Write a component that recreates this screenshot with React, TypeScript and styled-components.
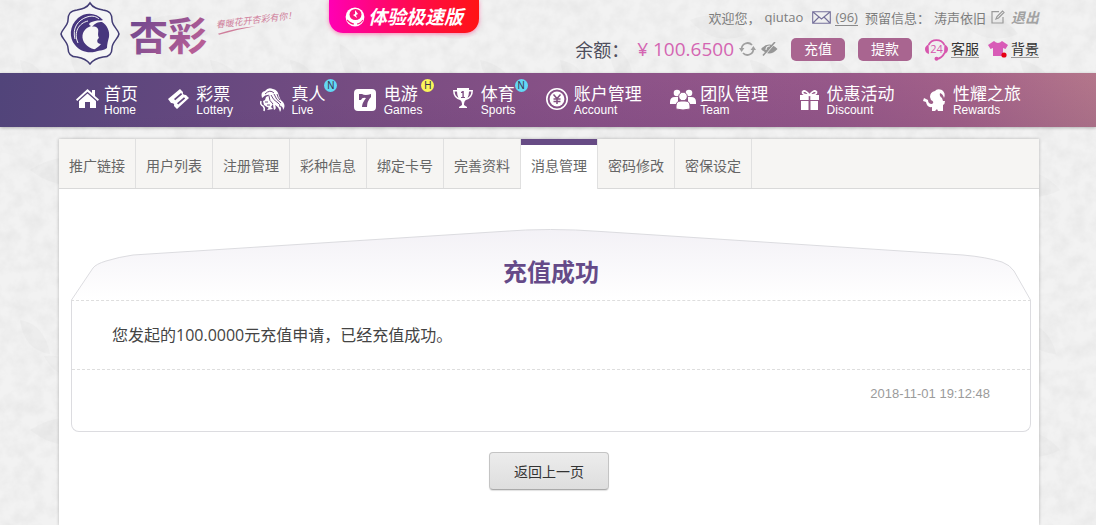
import React from "react";
import styled, { createGlobalStyle, css } from "styled-components";

const CJK = `"Open Sans", "Noto Sans CJK SC", sans-serif`;
const LATIN = `"Liberation Sans", "Noto Sans CJK SC", sans-serif`;

const GlobalStyle = createGlobalStyle`
  * { box-sizing: border-box; }
  body { margin: 0; background: #efefef; font-family: ${CJK}; color: #444; }
  a { color: inherit; text-decoration: none; }
  button { font-family: inherit; cursor: pointer; }
  h1, p, ul { margin: 0; padding: 0; }
`;

const Page = styled.div`
  position: relative;
  isolation: isolate;
  display: flex;
  flex-direction: column;
  min-height: 100vh;
`;

const Backdrop = styled.svg`
  position: absolute;
  inset: 0;
  z-index: -1;
  width: 100%;
  height: 100%;
`;

const frame = css`
  width: calc(100% - 116px);
  max-width: 980px;
  margin: 0 auto;
  position: relative;
  left: 1px;
`;

const Header = styled.header`
  ${frame}
  display: flex;
  align-items: flex-start;
  height: 73px;
`;

const LogoLink = styled.a`
  flex: none;
  width: 270px;
  height: 68px;
`;

const Banner = styled.a`
  flex: none;
  display: flex;
  align-items: center;
  justify-content: center;
  gap: 3px;
  width: 150px;
  height: 33px;
  border-radius: 0 0 14px 14px;
  background: linear-gradient(90deg, #ff00b4, #ff0a50 55%, #ff1414);
  box-shadow: 0 1px 4px rgba(255, 60, 140, 0.6);
  color: #fff;
  font-size: 19px;
  line-height: 32px;
  font-weight: 700;
  font-style: italic;
  white-space: nowrap;
`;

const Account = styled.div`
  flex: 1;
  display: flex;
  flex-direction: column;
  align-items: flex-end;
  padding-top: 7px;
  white-space: nowrap;
`;

const Row = styled.div<{ $size: number; $height: number }>`
  display: flex;
  align-items: center;
  height: ${(p) => p.$height}px;
  font-size: ${(p) => p.$size}px;
  color: #7d7d7d;
`;

const Item = styled.span<{ $gap?: number }>`
  display: inline-flex;
  align-items: center;
  margin-left: ${(p) => p.$gap ?? 0}px;
`;

const TextLink = styled.a<{ $dark?: boolean }>`
  line-height: 16px;
  border-bottom: 1px solid ${(p) => (p.$dark ? "#999" : "#8a8a8a")};
  color: ${(p) => (p.$dark ? "#333" : "#7d7d7d")};
`;

const Logout = styled.a`
  margin-left: 6px;
  font-size: 14px;
  font-weight: 700;
  font-style: italic;
  color: #a2a2a2;
`;

const BalanceLabel = styled.span`
  font-size: 18px;
  color: #4e4e5c;
`;

const Amount = styled.span`
  font-size: 19px;
  color: #d465b2;
`;

const IconButton = styled.button`
  display: flex;
  margin-left: 5px;
  padding: 0;
  border: 0;
  background: none;
`;

const PillButton = styled.button`
  width: 54px;
  height: 23px;
  margin-left: 13px;
  padding: 0;
  border: 0;
  border-radius: 5px;
  background: #a96590;
  color: #fff;
  font-size: 14px;
  line-height: 22px;
`;

const NavBar = styled.nav`
  height: 54px;
  background: linear-gradient(176deg, rgba(255, 255, 255, 0) 40%, rgba(70, 40, 100, 0.16)),
    linear-gradient(98deg, #51447a 0%, #65487f 18%, #7a4d82 36%, #8b5288 55%, #98598a 75%, #a8648a 88%, #bb7c8d 100%);
  box-shadow: 0 1px 3px rgba(0, 0, 0, 0.25);
`;

const NavList = styled.ul`
  ${frame}
  display: flex;
  justify-content: space-between;
  padding: 11px 18px 0 17px;
  list-style: none;
`;

const NavLink = styled.a`
  position: relative;
  display: grid;
  grid-template-columns: 28px auto;
  grid-template-rows: 20px 12px;
  color: #fff;
  white-space: nowrap;
  svg { grid-row: 1 / 3; margin-top: 4px; }
`;

const NavLabel = styled.span`
  font-size: 17px;
  line-height: 20px;
`;

const NavSub = styled.span`
  font-family: ${LATIN};
  font-size: 12px;
  line-height: 12px;
`;

const Badge = styled.span<{ $hot: boolean }>`
  position: absolute;
  left: 100%;
  top: -5px;
  width: 13px;
  height: 13px;
  margin-left: -1px;
  border-radius: 50%;
  background: ${(p) => (p.$hot ? "#fbf65a" : "#63d8f4")};
  color: #3a3350;
  font-family: ${LATIN};
  font-size: 10px;
  line-height: 13px;
  text-align: center;
`;

const Panel = styled.main`
  ${frame}
  flex: 1;
  margin-top: 12px;
  background: #fff;
  box-shadow: 0 0 3px rgba(0, 0, 0, 0.25);
`;

const Tabs = styled.nav`
  display: flex;
  height: 50px;
  background: #f6f5f3;
  border-bottom: 1px solid #d9d9d9;
`;

const Tab = styled.a<{ $active: boolean }>`
  width: 77px;
  height: 49px;
  padding-top: 2px;
  border-right: 1px solid #e0e0e0;
  color: #666;
  font-size: 14px;
  line-height: 49px;
  text-align: center;
  white-space: nowrap;
  ${(p) =>
    p.$active &&
    css`
      height: 50px;
      background: linear-gradient(#674b85 6px, #fff 6px);
    `}
`;

const Notice = styled.article`
  position: relative;
  margin: 40px 8px 0 12px;
`;

const Arch = styled.svg`
  position: absolute;
  top: 0;
  left: 0;
  z-index: 0;
  width: 100%;
  height: 72px;
`;

const Title = styled.h1`
  position: relative;
  height: 71px;
  padding-top: 25px;
  color: #654a88;
  font-size: 24px;
  line-height: 36px;
  text-align: center;
`;

const NoticeBody = styled.div`
  border: 1px solid #dcdce0;
  border-top: 1px dashed #dedede;
  border-radius: 0 0 8px 8px;
`;

const Message = styled.p`
  padding: 22px 40px;
  border-bottom: 1px dashed #dedede;
  font-size: 16px;
  line-height: 24px;
`;

const Time = styled.time`
  display: block;
  padding: 15px 40px 29px;
  color: #9b9b9b;
  font-family: ${LATIN};
  font-size: 13px;
  line-height: 17px;
  text-align: right;
`;

const BackButton = styled.button`
  display: block;
  width: 120px;
  height: 38px;
  margin: 20px auto 34px;
  border: 1px solid #c4c4c4;
  border-bottom-color: #aaa;
  border-radius: 4px;
  background: linear-gradient(#ececec, #dedede);
  box-shadow: 0 1px 1px rgba(0, 0, 0, 0.12);
  color: #333;
  font-size: 14px;
`;

function LeafSprig() {
  return (
    <g fill="#000" fillOpacity="0.02">
      <path d="M20 60q24 4 30 34q-26-4-30-34zM44 96q30-2 44 22q-30 4-44-22zM70 44q26 14 22 44q-24-14-22-44z" />
      <path d="M150 20q36-14 58 14q-34 14-58-14zM180 70q-8 34 18 56q12-32-18-56zM210 60q30 6 36 34q-30-2-36-34z" />
      <path d="M30 170q40-26 74 4q-38 24-74-4zM110 190q8 34-14 54q-18-28 14-54zM190 180q34-20 60 10q-36 18-60-10z" />
    </g>
  );
}

function Texture() {
  return (
    <Backdrop aria-hidden="true">
      <defs>
        <filter id="mottle" x="0" y="0" width="100%" height="100%">
          <feTurbulence type="fractalNoise" baseFrequency="0.07" numOctaves="4" seed="8" />
          <feColorMatrix values="0 0 0 0 0.3  0 0 0 0 0.3  0 0 0 0 0.3  0.18 0 0 0 -0.06" />
        </filter>
        <pattern id="leaves" width="270" height="260" patternUnits="userSpaceOnUse">
          <LeafSprig />
        </pattern>
      </defs>
      <rect width="100%" height="100%" fill="#f2f2f2" />
      <rect width="100%" height="100%" filter="url(#mottle)" />
      <rect width="100%" height="100%" fill="url(#leaves)" />
    </Backdrop>
  );
}

function Logo() {
  return (
    <svg width="270" height="68" viewBox="0 0 270 68" role="img" aria-label="杏彩">
      <defs>
        <linearGradient id="brand" x1="0" x2="1" y1="0" y2="0.6">
          <stop offset="0" stopColor="#64448e" />
          <stop offset="1" stopColor="#b85f96" />
        </linearGradient>
      </defs>
      <path
        d="M31 3C34 8 39 9 44 10C51 11 53 14 53 20C53 26 59 29 60 34C59 39 53 42 53 48C53 54 50 57 44 57C38 58 34 60 31 64C28 60 24 58 18 57C12 57 9 54 9 48C9 42 3 39 2 34C3 29 9 26 9 20C9 14 11 11 18 10C23 9 28 8 31 3Z"
        fill="#f5f5f6"
        stroke="#433d75"
        strokeWidth="1.5"
      />
      <path
        d="M44 20C37 12 26 12 19 18C10 26 10 38 16 45C22 53 33 54 41 50C33 50 26 46 24 40C22 33 26 28 32 26C28 24 31 22 36 21C39 20 42 21 44 20Z"
        fill="#47367e"
      />
      <path d="M43 22C48 25 51 31 50 37C49 41 48 44 48 48C44 51 39 51 35 50C38 47 40 47 42 44C38 44 37 40 40 38C38 34 40 32 39 29C38 27 36 26 33 27C36 23 39 22 43 22Z" fill="#47367e" />
      <path d="M16 39C13 28 19 20 28 17C34 15 38 17 40 19M19 43C14 32 20 23 29 21" fill="none" stroke="#f5f5f6" strokeWidth="1" />
      <text x="70" y="50" fill="url(#brand)" fontFamily={CJK} fontSize="39" fontWeight="700">杏彩</text>
      <g transform="rotate(-7 157 26)" fill="#cf7e9b">
        <text x="157" y="28" fontFamily={CJK} fontSize="9" fontStyle="italic">春暖花开杏彩有你！</text>
        <path d="M158 34Q178 30 196 31Q178 32 159 35Z" />
      </g>
    </svg>
  );
}

function Ball() {
  return (
    <svg width="20" height="20" viewBox="0 0 20 20" aria-hidden="true">
      <circle cx="10" cy="10" r="9.4" fill="#fff" />
      <ellipse cx="10.5" cy="7.5" rx="6" ry="5.5" fill="#fb147c" />
      <path d="M10 3L13 7L11 8L12 11L8 8L10 7Z" fill="#fff" />
      <path d="M2 13Q6 17 9 17M18 13Q15 17 12 17" stroke="#fb147c" fill="none" strokeWidth="1.2" />
    </svg>
  );
}

const Envelope = () => (
  <svg width="19" height="13" viewBox="0 0 19 13" fill="none" stroke="#75709b" strokeWidth="1.1" aria-hidden="true">
    <path d="M.7.7H18.3V12.3H.7ZM1 1L9.5 8L18 1M1 12L7 6M18 12L12 6" />
  </svg>
);

const EditIcon = () => (
  <svg width="14" height="14" viewBox="0 0 14 14" fill="none" stroke="#9a9a9a" strokeWidth="1.2" aria-hidden="true">
    <path d="M8 1.6H1V13H12V7M5 9L6 6.5L11.5 1L13 2.5L7.5 8Z" />
  </svg>
);

const RefreshIcon = () => (
  <svg width="17" height="16" viewBox="0 0 17 16" aria-hidden="true">
    <path d="M2.6 8A6 6 0 0 1 13 4M14.4 8A6 6 0 0 1 4 12" fill="none" stroke="#a0a0a0" strokeWidth="1.8" />
    <path d="M0 7H5.4L2.6 11ZM11.6 9H17L14.4 5Z" fill="#a0a0a0" />
  </svg>
);

const EyeOffIcon = () => (
  <svg width="17" height="14" viewBox="0 0 17 14" aria-hidden="true">
    <path d="M0 7Q8 -2 16.5 7Q8 16 0 7Z" fill="#969696" />
    <path d="M5 8Q5 4 9 4M15 0L3 14" fill="none" stroke="#f0f0f0" strokeWidth="1.1" />
    <path d="M14 0L2 13.5" stroke="#969696" strokeWidth="1.6" />
  </svg>
);

const HeadsetIcon = () => (
  <svg width="23" height="23" viewBox="0 0 23 23" aria-hidden="true">
    <path d="M3.5 7A9 9 0 0 1 19.5 7M19.5 15Q17 20 12 21" fill="none" stroke="#d756ad" strokeWidth="1.7" />
    <path d="M3.6 6.5Q0 8 0 11Q0 15 4 16ZM19.4 6.5Q23 8 23 11Q23 15 19 16Z" fill="#d756ad" />
    <circle cx="11.5" cy="20.8" r="2" fill="#d756ad" />
    <text x="11.5" y="15" textAnchor="middle" fill="#d756ad" fontFamily={CJK} fontSize="11">24</text>
  </svg>
);

const ShirtIcon = () => (
  <svg width="20" height="17" viewBox="0 0 20 17" aria-hidden="true">
    <path d="M0 4L6 0Q10 4 14 0L20 4L17.5 8L15 7V15H5V7L2.5 8Z" fill="#d85bb7" />
    <circle cx="16" cy="14" r="2.6" fill="#e60012" />
  </svg>
);

const navIcons: Record<string, React.ReactNode> = {
  Home: (
    <path d="M0 11.5L11.5 1L16 5V2H19V8L23 11.5L21.8 13L11.5 3.8L1.2 13ZM3 13L11.5 5.5L20 13V20H14V14H9V20H3Z" />
  ),
  Lottery: (
    <path fillRule="evenodd" d="M0 11L12 1L15 4Q14 7 18 7L21 10L9 21L6 18Q7 15 3 15ZM6 11L13 5L14.2 6.3L7.2 12.3ZM9 15.3L16 9.3L17.2 10.6L10.2 16.6Z" />
  ),
  Live: (
    <g transform="translate(-3 0)">
      <path d="M2 10Q0 4 5 3Q8-1 13 1Q18 2 19 8Q20 12 23 14Q26 18 23 22Q23 18 20 18Q22 21 20 24Q19 19 15 17Q17 21 14 22Q13 18 13 16L11 19L13 21L7 22Q10 19 7 19L4 17L3 13L5 12L6 9L10 7Q6 6 2 10Z" />
      <path d="M1 13Q0 17 3 18Q5 20 4 23" fill="none" stroke="currentColor" strokeWidth="1.5" />
      <g fill="none" stroke="#6f4b80" strokeWidth="1">
        <path d="M5 6Q10 1 14 5M11 7Q13 12 18 15Q20 16 20 19M14 6Q16 12 21 15M17 6Q18 10 20 12M9 8Q9 13 13 16" />
        <path d="M5 14H8M7 17H10" />
      </g>
    </g>
  ),
  Games: (
    <g transform="translate(-2 0)">
      <path fillRule="evenodd" d="M4 1H18Q22 1 22 5V19Q22 23 18 23H4Q0 23 0 19V5Q0 1 4 1ZM5 6V12H7Q8 9 12 10Q8 15 8 19H13Q13 13 17 9V6Q11 8 8 6Z" />
    </g>
  ),
  Sports: (
    <path fillRule="evenodd" d="M4 0H16V2H20Q20 10 13 12Q11 13 11 17L14 19V20H6V19L9 17Q9 13 7 12Q0 10 0 2H4ZM1.6 3.5Q2 8 5.5 10Q4 7 4 3.5ZM18.4 3.5Q18 8 14.5 10Q16 7 16 3.5ZM8 4V5H9.4V9H8V10H12V9H10.8V3H9.5Z" />
  ),
  Account: (
    <g fill="none" stroke="currentColor">
      <circle cx="11" cy="11" r="10.2" strokeWidth="1.6" />
      <circle cx="11" cy="11" r="7.4" fill="currentColor" stroke="none" />
      <path stroke="#825080" strokeWidth="1.5" d="M7.5 6.5L11 10.5L14.5 6.5M11 10V16M7.5 11H14.5M7.5 13.5H14.5" />
    </g>
  ),
  Team: (
    <g transform="translate(-1 0)">
      <circle cx="6" cy="5" r="3.3" /><circle cx="18" cy="5" r="3.3" />
      <path d="M-1 14Q-1 9 4 9H7L7 16H-1ZM25 14Q25 9 20 9H17V16H25Z" />
      <g stroke="#8f5587" strokeWidth="1">
        <circle cx="12" cy="8.5" r="4.3" />
        <path d="M5 21V18Q5 13 10 13H14Q19 13 19 18V21Q12 23 5 21Z" />
      </g>
    </g>
  ),
  Discount: (
    <g>
      <path d="M1 7H20V12H11.3V8H9.7V12H1ZM2 13H9.5V22H2ZM11.5 13H19V22H11.5Z" />
      <path d="M10.5 7Q6 1 3.5 4Q3 7 10.5 7Q18 7 17.5 4Q15 1 10.5 7Z" fill="none" stroke="currentColor" strokeWidth="1.8" />
    </g>
  ),
  Rewards: (
    <path d="M5 9Q5 4 10 3Q12 0 17 2Q21 5 19 10Q18 6 15 5Q14 8 17 10L18 13L20 13Q20 16 18 17L18 23H13L12 21L10 23H7V19Q2 20 1 14L-2 13L-1 10L3 12Q3 16 7 16Q10 14 6 12Z" />
  ),
};

const navItems = [
  { label: "首页", sub: "Home" },
  { label: "彩票", sub: "Lottery" },
  { label: "真人", sub: "Live", badge: "N" },
  { label: "电游", sub: "Games", badge: "H" },
  { label: "体育", sub: "Sports", badge: "N" },
  { label: "账户管理", sub: "Account" },
  { label: "团队管理", sub: "Team" },
  { label: "优惠活动", sub: "Discount" },
  { label: "性耀之旅", sub: "Rewards" },
];

const tabs = ["推广链接", "用户列表", "注册管理", "彩种信息", "绑定卡号", "完善资料", "消息管理", "密码修改", "密保设定"];

export default function App() {
  return (
    <Page>
      <GlobalStyle />
      <Texture />
      <Header>
        <LogoLink href="#"><Logo /></LogoLink>
        <Banner href="#"><Ball />体验极速版</Banner>
        <Account>
          <Row $size={13} $height={20}>
            <Item>欢迎您，</Item>
            <Item $gap={4}>qiutao</Item>
            <Item $gap={9}><Envelope /></Item>
            <Item $gap={4}><TextLink href="#">(96)</TextLink></Item>
            <Item $gap={7}>预留信息：</Item>
            <Item $gap={4}>涛声依旧</Item>
            <IconButton aria-label="编辑"><EditIcon /></IconButton>
            <Logout href="#">退出</Logout>
          </Row>
          <Row $size={14} $height={44}>
            <BalanceLabel>余额：</BalanceLabel>
            <Item $gap={8}><Amount>¥ 100.6500</Amount></Item>
            <IconButton aria-label="刷新"><RefreshIcon /></IconButton>
            <IconButton aria-label="隐藏余额"><EyeOffIcon /></IconButton>
            <PillButton>充值</PillButton>
            <PillButton>提款</PillButton>
            <Item $gap={13}><HeadsetIcon /></Item>
            <Item $gap={3}><TextLink $dark href="#">客服</TextLink></Item>
            <Item $gap={9}><ShirtIcon /></Item>
            <Item $gap={3}><TextLink $dark href="#">背景</TextLink></Item>
          </Row>
        </Account>
      </Header>
      <NavBar>
        <NavList>
          {navItems.map((n) => (
            <li key={n.sub}>
              <NavLink href="#">
                <svg width="24" height="24" viewBox="0 0 24 24" fill="currentColor" overflow="visible" aria-hidden="true">
                  {navIcons[n.sub]}
                </svg>
                <NavLabel>{n.label}</NavLabel>
                <NavSub>{n.sub}</NavSub>
                {n.badge && <Badge $hot={n.badge === "H"}>{n.badge}</Badge>}
              </NavLink>
            </li>
          ))}
        </NavList>
      </NavBar>
      <Panel>
        <Tabs>
          {tabs.map((t) => (
            <Tab key={t} href="#" $active={t === "消息管理"}>{t}</Tab>
          ))}
        </Tabs>
        <Notice>
          <Arch viewBox="0 0 960 72" preserveAspectRatio="none" aria-hidden="true">
            <defs>
              <linearGradient id="arch" x1="0" x2="0" y1="0" y2="1">
                <stop offset="0" stopColor="#f3f1f6" />
                <stop offset="1" stopColor="#ffffff" />
              </linearGradient>
            </defs>
            <path
              d="M.5 71L22 39Q25 35 35 32Q48 28 62 26L430 2.5Q479-1.5 530 2.5L892 26Q915 28 931 33Q939 36 943 42L959.5 71"
              fill="url(#arch)"
              stroke="#dcdce0"
            />
          </Arch>
          <Title>充值成功</Title>
          <NoticeBody>
            <Message>您发起的100.0000元充值申请，已经充值成功。</Message>
            <Time dateTime="2018-11-01T19:12:48">2018-11-01 19:12:48</Time>
          </NoticeBody>
        </Notice>
        <BackButton>返回上一页</BackButton>
      </Panel>
    </Page>
  );
}
